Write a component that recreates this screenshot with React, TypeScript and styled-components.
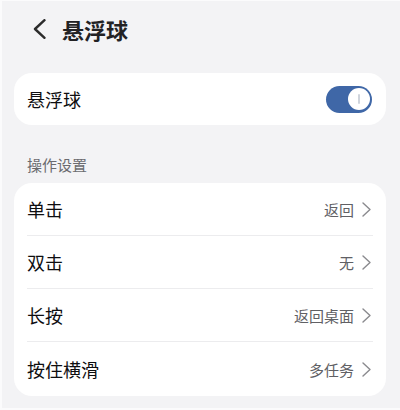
import React from 'react';
import styled, { createGlobalStyle } from 'styled-components';

const GlobalStyle = createGlobalStyle`
  html, body {
    margin: 0;
    padding: 0;
    background: #f3f3f5;
  }
  body {
    font-family: 'Noto Sans CJK SC', 'Noto Sans', sans-serif;
    color: #1c1c1e;
  }
`;

const actions = [
  { label: '单击', value: '返回' },
  { label: '双击', value: '无' },
  { label: '长按', value: '返回桌面' },
  { label: '按住横滑', value: '多任务' },
];

const BackIcon = () => (
  <svg width="14" height="20" viewBox="0 0 14 20" fill="none">
    <path d="M11.5 1.2L2 10L11.5 18.8" stroke="#2b2b2b" strokeWidth="2.4" strokeLinecap="round" strokeLinejoin="round" />
  </svg>
);

const ChevronIcon = () => (
  <svg width="9" height="15" viewBox="0 0 9 15" fill="none">
    <path d="M1 1L8 7.5L1 14" stroke="#8a8a8e" strokeWidth="1.4" strokeLinecap="round" strokeLinejoin="round" />
  </svg>
);

const App = () => {
  return (
    <Screen>
      <GlobalStyle />
      <Header>
        <BackButton>
          <BackIcon />
        </BackButton>
        <Title>悬浮球</Title>
      </Header>

      <Card>
        <SwitchRow>
          <RowLabel>悬浮球</RowLabel>
          <Toggle $on>
            <Knob />
          </Toggle>
        </SwitchRow>
      </Card>

      <SectionLabel>操作设置</SectionLabel>

      <Card>
        {actions.map((item, i) => (
          <ActionRow key={item.label} $last={i === actions.length - 1}>
            <RowLabel>{item.label}</RowLabel>
            <RowValue>
              {item.value}
              <ChevronIcon />
            </RowValue>
          </ActionRow>
        ))}
      </Card>
    </Screen>
  );
};

export default App;

const Screen = styled.div`
  width: 400px;
  height: 410px;
  box-sizing: border-box;
  padding: 0 14px 0 12px;
  background: #f3f3f5;
  border-left: 2px solid #fbfbfc;
  border-top: 1px solid #fbfbfc;
  border-bottom: 2px solid #fbfbfc;
  overflow: hidden;
`;

const Header = styled.div`
  display: flex;
  align-items: center;
  height: 56px;
  margin-bottom: 16px;
  padding-left: 19px;
`;

const BackButton = styled.div`
  display: flex;
  align-items: center;
  width: 29px;
  svg {
    display: block;
  }
`;

const Title = styled.h1`
  margin: 0;
  font-size: 22px;
  font-weight: 700;
  color: #222224;
  line-height: 1;
`;

const Card = styled.div`
  background: #ffffff;
  border-radius: 18px;
  padding: 0 13px;
`;

const SwitchRow = styled.div`
  display: flex;
  align-items: center;
  justify-content: space-between;
  height: 52px;
`;

const RowLabel = styled.span`
  font-size: 18px;
  font-weight: 400;
  color: #0e0e10;
`;

const Toggle = styled.div<{ $on?: boolean }>`
  position: relative;
  width: 46px;
  height: 27px;
  border-radius: 14px;
  margin-right: 1px;
  background: ${(p) => (p.$on ? '#3f67a7' : '#d0d0d4')};
`;

const Knob = styled.div`
  position: absolute;
  top: 2.5px;
  right: 2.5px;
  width: 22px;
  height: 22px;
  border-radius: 50%;
  background: #ffffff;
  &::after {
    content: '';
    position: absolute;
    left: 10px;
    top: 6px;
    width: 2px;
    height: 10px;
    border-radius: 1px;
    background: #cfd4dc;
  }
`;

const SectionLabel = styled.div`
  font-size: 15px;
  color: #6b6b6f;
  padding: 30px 13px 8px;
  line-height: 20px;
`;

const ActionRow = styled.div<{ $last?: boolean }>`
  display: flex;
  align-items: center;
  justify-content: space-between;
  height: ${(p) => (p.$last ? '54px' : '52px')};
  border-bottom: ${(p) => (p.$last ? 'none' : '1px solid #ececee')};
`;

const RowValue = styled.span`
  display: flex;
  align-items: center;
  gap: 8px;
  font-size: 15px;
  color: #606064;
  padding-right: 2px;
`;
